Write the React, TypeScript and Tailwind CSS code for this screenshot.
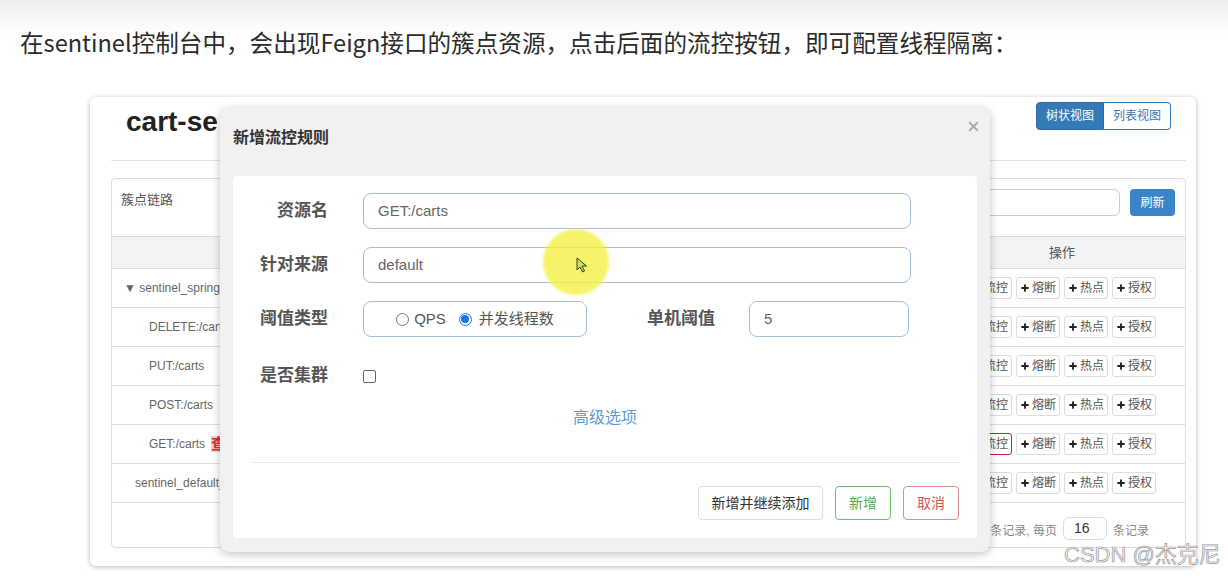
import React from 'react';
import { Plus, X } from 'lucide-react';

const ui = "font-['Liberation_Sans','Noto_Sans_CJK_SC',sans-serif]";

const rows = [
  { name: '▼ sentinel_spring_web_context', pad: 'pl-[12px]' },
  { name: 'DELETE:/carts', pad: 'pl-[37px]' },
  { name: 'PUT:/carts', pad: 'pl-[37px]' },
  { name: 'POST:/carts', pad: 'pl-[37px]' },
  { name: 'GET:/carts', pad: 'pl-[37px]', mark: true },
  { name: 'sentinel_default_context', pad: 'pl-[23px]' },
];

const ActionButton: React.FC<{ label: string; active?: boolean }> = ({ label, active }) => (
  <div
    className={`w-[44px] h-[22px] flex items-center justify-center gap-[2px] rounded-[3px] bg-white text-[12px] text-[#555] ${
      active ? 'border-[1.5px] border-[#c0282d]' : 'border border-[#dddddd]'
    }`}
  >
    <Plus size={10} strokeWidth={4.5} className="text-[#222]" />
    <span>{label}</span>
  </div>
);

const Field: React.FC<{ label: string; children: React.ReactNode; className?: string }> = ({ label, children, className }) => (
  <div className={`flex items-center h-[36px] ${className ?? ''}`}>
    <div className="w-[77px] text-right text-[17px] font-bold text-[#555] leading-[22px]">{label}</div>
    <div className="ml-[35px] flex items-center">{children}</div>
  </div>
);

const Input: React.FC<{ value: string; w: string }> = ({ value, w }) => (
  <div className={`${w} h-[36px] rounded-[8px] border-[1.5px] border-[#a6bedb] bg-white flex items-center pl-[14px] text-[15px] text-[#666]`}>
    {value}
  </div>
);

export default function App() {
  return (
    <div className="relative w-[1228px] h-[578px] overflow-hidden bg-[linear-gradient(to_bottom,#eeeeee,#ffffff_34px)]">
      <p className="pt-[26px] pl-[20px] text-[23.6px] leading-[32px] text-[#2b2b2b] font-['Noto_Sans_CJK_SC',sans-serif]">
        在sentinel控制台中，会出现Feign接口的簇点资源，点击后面的流控按钮，即可配置线程隔离：
      </p>

      {/* screenshot card */}
      <div className={`${ui} mt-[39px] ml-[90px] w-[1106px] h-[469px] bg-white rounded-[6px] shadow-[0_1px_5px_rgba(0,0,0,0.28)]`}>
        <div className="h-[63px] flex items-start">
          <h1 className="pl-[36px] pt-[8px] text-[28px] leading-[34px] font-bold text-[#222]">cart-se</h1>
          <div className="ml-auto mr-[25px] mt-[5px] flex h-[28px] text-[12px]">
            <div className="w-[68px] flex items-center justify-center bg-[#337ab7] text-white rounded-l-[4px] border border-[#2e6da4]">树状视图</div>
            <div className="w-[67px] flex items-center justify-center bg-white text-[#337ab7] rounded-r-[4px] border border-l-0 border-[#337ab7]">列表视图</div>
          </div>
        </div>
        <div className="ml-[21px] mr-[10px] border-t border-[#e3e3e3]" />

        <div className="mt-[17px] ml-[21px] mr-[10px] h-[370px] border border-[#dddddd] rounded-[4px] flex flex-col">
          <div className="h-[57px] flex items-start">
            <div className="pl-[9px] pt-[11px] text-[13px] text-[#555]">簇点链路</div>
            <div className="ml-auto mt-[10px] mr-[10px] flex gap-[10px]">
              <div className="w-[250px] h-[27px] rounded-[6px] border border-[#cccccc] bg-white" />
              <div className="w-[45px] h-[27px] rounded-[4px] bg-[#3a84c8] text-white text-[12px] flex items-center justify-center">刷新</div>
            </div>
          </div>
          <div className="h-[32px] flex items-center bg-[#f3f3f3] border-t border-[#dddddd] text-[13px] text-[#555]">
            <div className="flex-1" />
            <div className="w-[246px] text-center">操作</div>
          </div>
          {rows.map((r) => (
            <div key={r.name} className="h-[39px] flex items-center border-t border-[#dddddd] text-[12px] text-[#666]">
              <div className={`flex-1 flex items-center whitespace-nowrap ${r.pad}`}>
                <span>{r.name}</span>
                {r.mark && (
                  <span className="ml-[6px] text-[15px] leading-[16px] font-bold text-[#d62c2c] bg-[#f8d4d4]">查</span>
                )}
              </div>
              <div className="w-[246px] flex justify-center gap-[4px]">
                <ActionButton label="流控" active={r.mark} />
                <ActionButton label="熔断" />
                <ActionButton label="热点" />
                <ActionButton label="授权" />
              </div>
            </div>
          ))}
          <div className="flex-1 border-t border-[#dddddd] flex items-start justify-end pr-[36px] pt-[14px] text-[12px] text-[#888]">
            <span className="mt-[5px]">共 6 条记录, 每页</span>
            <div className="mx-[6px] w-[44px] h-[23px] rounded-[6px] border border-[#dddddd] text-[14px] text-[#333] flex items-center pl-[10px]">16</div>
            <span className="mt-[5px]">条记录</span>
          </div>
        </div>
      </div>

      {/* modal */}
      <div className={`${ui} absolute left-[220px] top-[108px] w-[770px] h-[444px] bg-[#f1f1f1] rounded-[9px] shadow-[0_2px_10px_rgba(0,0,0,0.25)]`}>
        <div className="relative h-[68px]">
          <div className="pl-[13px] pt-[19px] text-[16px] leading-[22px] font-bold text-[#333]">新增流控规则</div>
          <X size={15} strokeWidth={3} className="absolute right-[9px] top-[11px] text-[#aaaaaa]" />
        </div>
        <div className="mx-[13px] h-[362px] bg-white rounded-[4px] px-[18px] pt-[17px]">
          <Field label="资源名">
            <Input value="GET:/carts" w="w-[548px]" />
          </Field>
          <Field label="针对来源" className="mt-[18px]">
            <Input value="default" w="w-[548px]" />
          </Field>
          <Field label="阈值类型" className="mt-[18px]">
            <div className="w-[224px] h-[36px] rounded-[8px] border-[1.5px] border-[#a6bedb] flex items-center justify-center text-[15px] text-[#555]">
              <span className="w-[13px] h-[13px] rounded-full border border-[#777] bg-white" />
              <span className="ml-[5px]">QPS</span>
              <span className="ml-[13px] w-[13px] h-[13px] rounded-full border border-[#1a73e8] bg-white flex items-center justify-center">
                <span className="w-[8px] h-[8px] rounded-full bg-[#1a73e8]" />
              </span>
              <span className="ml-[7px]">并发线程数</span>
            </div>
            <div className="ml-[60px] text-[17px] font-bold text-[#555]">单机阈值</div>
            <div className="ml-[34px]">
              <Input value="5" w="w-[160px]" />
            </div>
          </Field>
          <Field label="是否集群" className="mt-[21px]">
            <span className="w-[13px] h-[13px] rounded-[2px] border border-[#666] bg-white" />
          </Field>
          <div className="mt-[13px] text-center text-[16px] leading-[22px] text-[#5f9bd3]">高级选项</div>
          <div className="mt-[33px] border-t border-[#e8e8e8]" />
          <div className="mt-[23px] flex justify-end gap-[12px] text-[14px]">
            <div className="w-[125px] h-[34px] rounded-[4px] border border-[#dddddd] flex items-center justify-center text-[#333]">新增并继续添加</div>
            <div className="w-[56px] h-[34px] rounded-[4px] border border-[#6cbf6c] flex items-center justify-center text-[#4cae4c]">新增</div>
            <div className="w-[56px] h-[34px] rounded-[4px] border border-[#e08c8a] flex items-center justify-center text-[#d9534f]">取消</div>
          </div>
        </div>
      </div>

      {/* cursor highlight */}
      <div className="absolute left-[543px] top-[229px] w-[66px] h-[66px] rounded-full bg-[#f4ef45] opacity-80 blur-[1.5px]" />
      <svg className="absolute left-[576px] top-[257px]" width="12" height="16" viewBox="0 0 12 16">
        <path d="M1 1 L1 13 L4 10 L6.5 15 L8.5 14 L6 9 L10.5 9 Z" fill="#cfe05a" stroke="#3d3d1f" strokeWidth="1" strokeLinejoin="round" />
      </svg>

      <div className="absolute left-[1064px] top-[542px] text-[22px] leading-[26px] text-[#f4f4f4] [-webkit-text-stroke:0.7px_#9a9a9a] font-['Liberation_Sans','Noto_Sans_CJK_SC',sans-serif]">
        CSDN @杰克尼
      </div>
    </div>
  );
}
